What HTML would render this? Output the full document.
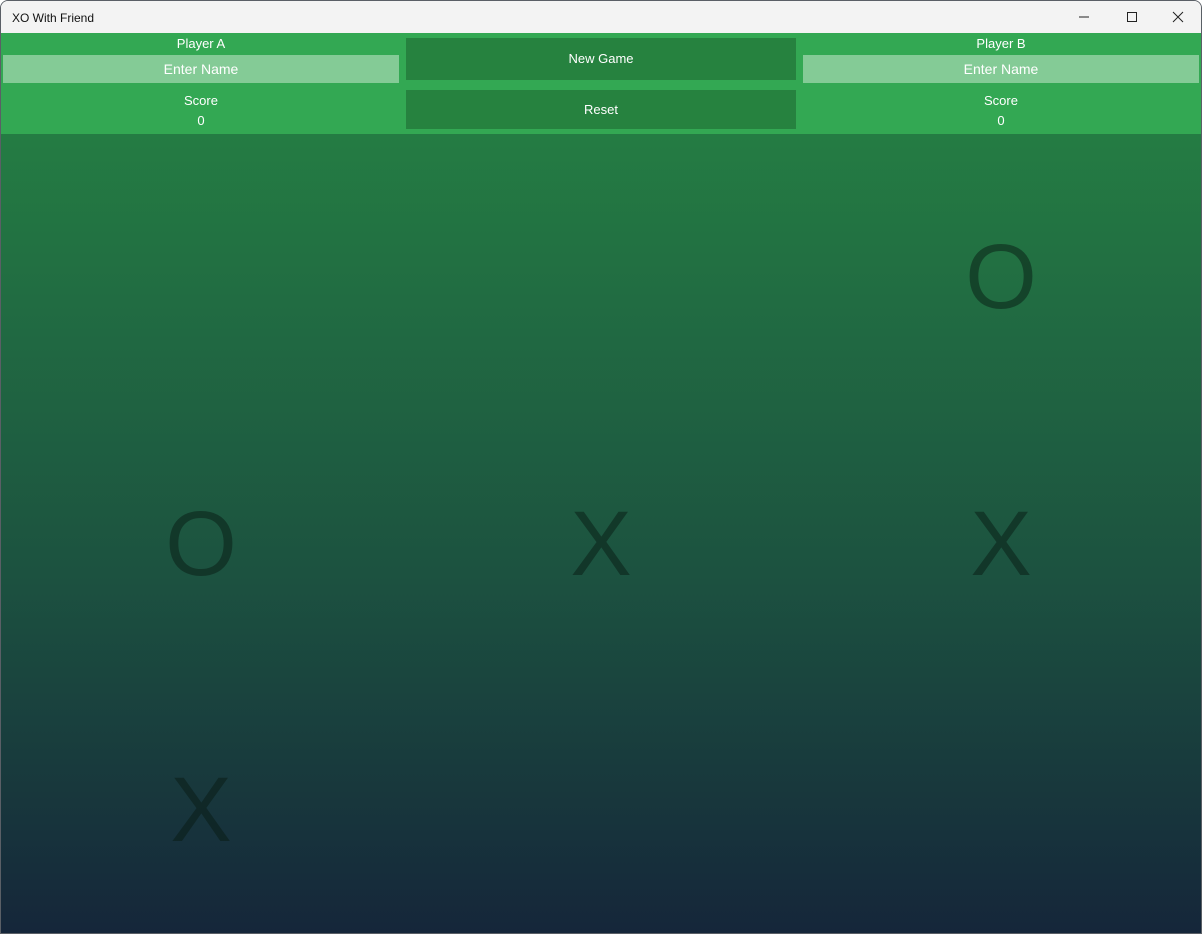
<!DOCTYPE html>
<html><head><style>
*{margin:0;padding:0;box-sizing:border-box}
body{width:1202px;height:934px;overflow:hidden;font-family:"Liberation Sans",sans-serif;background:#fff}
.win{position:absolute;left:0;top:0;width:1202px;height:934px;border:1px solid #5a5f66;border-radius:8px 8px 0 0;overflow:hidden;background:#f3f3f3}
.title{position:absolute;left:0;top:0;width:1202px;height:33px;background:#f3f3f3;font-size:12px;color:#111}
.title span{position:absolute;left:11px;top:10px}
.hdr{position:absolute;left:0;top:32px;width:1200px;height:101px;background:#33a853}
.lbl{position:absolute;color:#fff;font-size:13px;text-align:center;width:396px}
.inp{position:absolute;top:22px;height:28px;width:396px;background:#84cb96;color:#fff;font-size:14px;text-align:center;line-height:28px}
.btn{position:absolute;left:405px;width:390px;background:#26823f;color:#fff;font-size:13px;text-align:center}
.board{position:absolute;left:0;top:133px;width:1200px;height:800px;background:linear-gradient(#247c43,#1c5240 55%,#15263a)}
.g{position:absolute;width:400px;text-align:center;font-size:92px;color:rgba(8,25,18,0.5);line-height:100px}
</style></head><body>
<div class="win">
<div class="title"><span>XO With Friend</span>
<svg style="position:absolute;left:1077px;top:10px" width="12" height="12"><line x1="1" y1="6" x2="11" y2="6" stroke="#222" stroke-width="1"/></svg>
<svg style="position:absolute;left:1125px;top:10px" width="12" height="12"><rect x="1.5" y="1.5" width="9" height="9" fill="none" stroke="#222" stroke-width="1"/></svg>
<svg style="position:absolute;left:1171px;top:10px" width="12" height="12"><path d="M1 1L11 11M11 1L1 11" stroke="#222" stroke-width="1"/></svg>
</div>
<div class="hdr">
<div class="lbl" style="left:2px;top:3px">Player A</div>
<div class="inp" style="left:2px">Enter Name</div>
<div class="lbl" style="left:2px;top:60px">Score</div>
<div class="lbl" style="left:2px;top:80px">0</div>
<div class="btn" style="top:5px;height:42px;line-height:42px">New Game</div>
<div class="btn" style="top:57px;height:39px;line-height:39px">Reset</div>
<div class="lbl" style="left:802px;top:3px">Player B</div>
<div class="inp" style="left:802px">Enter Name</div>
<div class="lbl" style="left:802px;top:60px">Score</div>
<div class="lbl" style="left:802px;top:80px">0</div>
</div>
<div class="board">
<div class="g" style="left:800px;top:93px">O</div>
<div class="g" style="left:0;top:360px">O</div>
<div class="g" style="left:400px;top:360px">X</div>
<div class="g" style="left:800px;top:360px">X</div>
<div class="g" style="left:0;top:626px">X</div>
</div>
</div>
</body></html>
